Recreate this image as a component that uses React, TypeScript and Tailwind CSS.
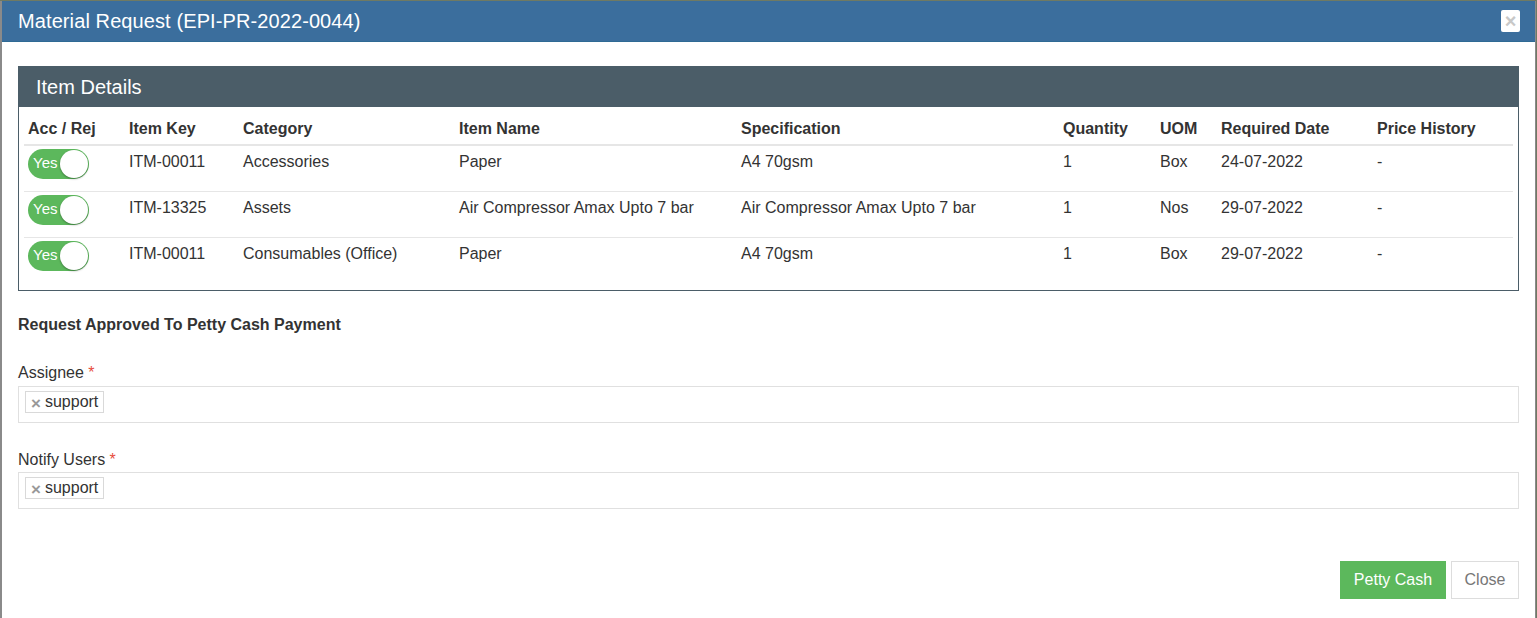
import React from "react";

const rows = [
  { key: "ITM-00011", cat: "Accessories", name: "Paper", spec: "A4 70gsm", qty: "1", uom: "Box", date: "24-07-2022", ph: "-" },
  { key: "ITM-13325", cat: "Assets", name: "Air Compressor Amax Upto 7 bar", spec: "Air Compressor Amax Upto 7 bar", qty: "1", uom: "Nos", date: "29-07-2022", ph: "-" },
  { key: "ITM-00011", cat: "Consumables (Office)", name: "Paper", spec: "A4 70gsm", qty: "1", uom: "Box", date: "29-07-2022", ph: "-" },
];

const cols = "grid grid-cols-[101px_114px_216px_282px_322px_97px_61px_156px_1fr]";

function Toggle() {
  return (
    <div className="relative mt-[1px] h-[30px] w-[61px] rounded-full bg-[#5cb85c]">
      <span className="absolute left-[5px] top-[4px] text-[15px] leading-[20px] text-white">Yes</span>
      <span className="absolute right-[1px] top-[1px] h-[28px] w-[28px] rounded-full bg-white shadow-[0_1px_2px_rgba(0,0,0,0.35)]" />
    </div>
  );
}

function Tag() {
  return (
    <div className="flex h-[22px] items-center gap-[4px] border border-[#d9d9d9] bg-white pl-[5px] pr-[5px] text-[16px] text-[#333]">
      <span className="pt-[2px] text-[17px] font-bold leading-none text-[#999]">×</span>
      <span className="leading-none">support</span>
    </div>
  );
}

export default function App() {
  return (
    <div
      className="h-[618px] w-[1537px] overflow-hidden bg-[#6f7a63] pt-[1px] text-[#333]"
      style={{ fontFamily: '"Liberation Sans", Arial, sans-serif' }}
    >
      <div className="h-full w-[1536px] border-l-[2px] border-r-[1px] border-l-[#8a8a8a] border-r-[#8a8a8a] bg-white">
        {/* Header */}
        <div className="flex h-[41px] items-center justify-between border-b border-[#2f6a94] bg-[#3b6e9d] pl-[16px] pr-[15px]">
          <span className="text-[20px] tracking-[0.1px] text-white">Material Request (EPI-PR-2022-0044)</span>
          <div className="flex h-[22px] w-[19px] items-center justify-center rounded-[2px] bg-white text-[20px] font-bold leading-none text-[#c8c8c8]">
            ×
          </div>
        </div>

        <div className="px-[16px] pt-[24px]">
          {/* Panel */}
          <div className="border border-[#4b5d68]">
            <div className="flex h-[40px] items-center bg-[#4b5d68] pl-[17px] text-[20px] text-white">Item Details</div>
            <div className="px-[5px] pb-[6px]">
              <div className={`${cols} h-[39px] items-center border-b-[2px] border-[#e6e6e6] pl-[4px] pt-[6px] text-[16px] font-bold text-[#333]`}>
                <div>Acc / Rej</div>
                <div>Item Key</div>
                <div>Category</div>
                <div>Item Name</div>
                <div>Specification</div>
                <div>Quantity</div>
                <div>UOM</div>
                <div>Required Date</div>
                <div>Price History</div>
              </div>
              {rows.map((r, i) => (
                <div
                  key={i}
                  className={`${cols} h-[46px] pl-[4px] pt-[2px] text-[16px] text-[#333] ${i < rows.length - 1 ? "border-b border-[#e6e6e6]" : ""}`}
                >
                  <div><Toggle /></div>
                  <div className="pt-[2px] leading-[24px]">{r.key}</div>
                  <div className="pt-[2px] leading-[24px]">{r.cat}</div>
                  <div className="pt-[2px] leading-[24px]">{r.name}</div>
                  <div className="pt-[2px] leading-[24px]">{r.spec}</div>
                  <div className="pt-[2px] leading-[24px]">{r.qty}</div>
                  <div className="pt-[2px] leading-[24px]">{r.uom}</div>
                  <div className="pt-[2px] leading-[24px]">{r.date}</div>
                  <div className="pt-[2px] leading-[24px]">{r.ph}</div>
                </div>
              ))}
            </div>
          </div>

          <div className="pt-[24px] text-[16px] font-bold leading-[20px] text-[#333]">Request Approved To Petty Cash Payment</div>

          <div className="pt-[27px]">
            <div className="text-[16px] leading-[22px] text-[#333]">
              Assignee <span className="text-[#e74c3c]">*</span>
            </div>
            <div className="mt-[2px] flex h-[37px] items-start border border-[#e0e0e0] pl-[6px] pt-[4px]">
              <Tag />
            </div>
          </div>

          <div className="pt-[26px]">
            <div className="text-[16px] leading-[22px] text-[#333]">
              Notify Users <span className="text-[#e74c3c]">*</span>
            </div>
            <div className="mt-[1px] flex h-[37px] items-start border border-[#e0e0e0] pl-[6px] pt-[4px]">
              <Tag />
            </div>
          </div>

          <div className="flex justify-end gap-[5px] pt-[52px]">
            <button className="h-[38px] w-[106px] bg-[#5cb85c] text-[16px] text-white">Petty Cash</button>
            <button className="h-[38px] w-[68px] border border-[#dddddd] bg-white text-[16px] text-[#777]">Close</button>
          </div>
        </div>
      </div>
    </div>
  );
}
